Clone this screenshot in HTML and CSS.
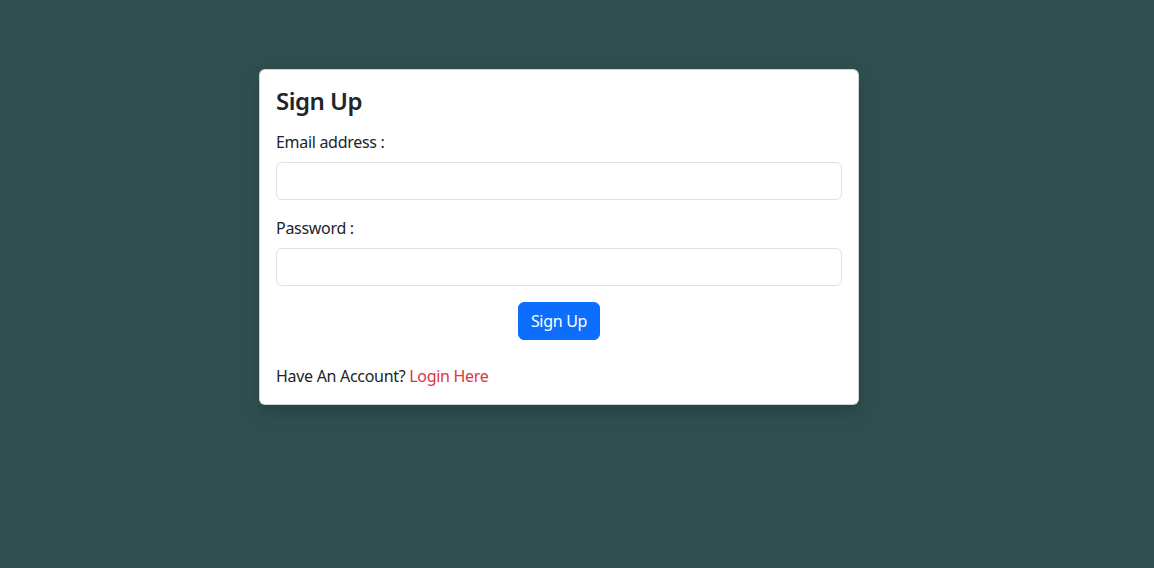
FILE: index.html
```html
<!DOCTYPE html>
<html>
<head>
<meta charset="utf-8">
<link rel="stylesheet" href="styles.css">
</head>
<body>
<div class="page">
  <div class="card">
    <h4 class="title">Sign Up</h4>
    <form class="form">
      <div class="field">
        <label class="label">Email address :</label>
        <input class="input" type="email">
      </div>
      <div class="field">
        <label class="label">Password :</label>
        <input class="input" type="password">
      </div>
      <div class="actions">
        <button class="btn" type="button">Sign Up</button>
      </div>
    </form>
    <p class="footer">Have An Account? <a class="link" href="#">Login Here</a></p>
  </div>
</div>
</body>
</html>
```
FILE: styles.css
```css
* { box-sizing: border-box; }
html, body { margin: 0; padding: 0; }
body {
  background: #2f4f4f;
  font-family: "Noto Sans", sans-serif;
  color: #212529;
  font-size: 16px;
  line-height: 24px;
  letter-spacing: -0.3px;
  height: 568px;
}
.page {
  padding: 69px 0 0 259px;
}
.card {
  width: 600px;
  background: #fff;
  border: 1px solid rgba(0,0,0,.175);
  border-radius: 6px;
  padding: 16px;
  box-shadow: 0 8px 16px rgba(0,0,0,.15);
}
.title {
  margin: 0 0 15px;
  font-size: 24px;
  line-height: 29px;
  font-weight: 600;
  letter-spacing: -0.5px;
}
.form { margin: 0; }
.field { margin-bottom: 16px; }
.label {
  display: block;
  margin-bottom: 8px;
}
.input {
  display: block;
  width: 100%;
  height: 38px;
  border: 1px solid #dee2e6;
  border-radius: 6px;
  padding: 6px 12px;
  font: inherit;
  background: #fff;
}
.actions {
  display: flex;
  justify-content: center;
}
.btn {
  height: 38px;
  padding: 6px 12px;
  background: #0d6efd;
  color: #fff;
  border: 1px solid #0d6efd;
  border-radius: 6px;
  font: inherit;
  letter-spacing: -0.3px;
}
.footer {
  margin: 24px 0 0;
}
.link {
  color: #dc3545;
  text-decoration: none;
}
```
